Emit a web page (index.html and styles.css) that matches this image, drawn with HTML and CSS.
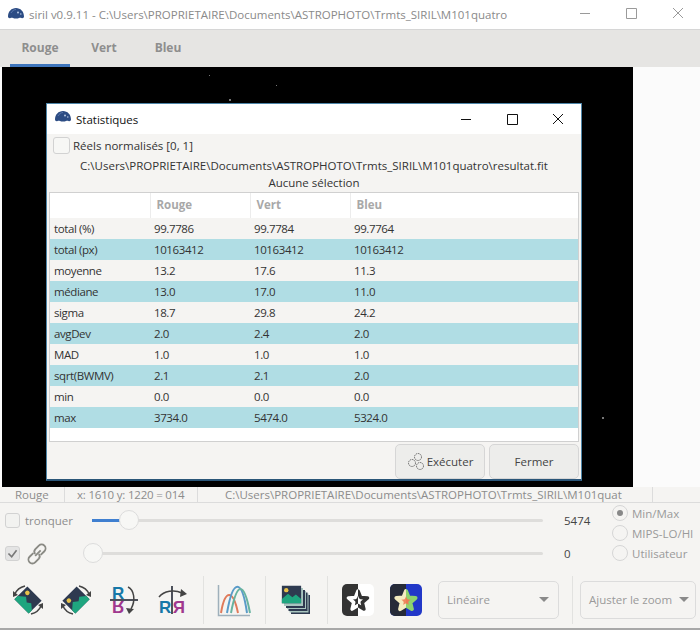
FILE: index.html
```html
<!DOCTYPE html>
<html lang="en">
<head>
	<title>siril</title>
	<link rel="stylesheet" href="styles.css">
</head>
<body>
<svg width="0" height="0" class="defs">
	<symbol id="logo" viewBox="0 0 16 11">
		<path d="M0 8.500C0 3.500 3.500 0 8 0s8 3.500 8 8.500c0 1.500-1.500 2-2.500 1.500-1-.5-1.500-.5-2.500 0-1 .5-1.500.5-3 .5s-2 0-3-.5c-1-.5-1.500-.5-2.500 0C1.500 10.500 0 10 0 8.500z" fill="#2c4c84"/>
		<path d="M3 5c1-2 3-3.500 5-3.500" fill="none" stroke="#5b78ad" stroke-width="1"/>
		<circle cx="10" cy="4.500" r="1" fill="#b5c6e2"/>
		<circle cx="12.800" cy="6" r=".8" fill="#b5c6e2"/>
	</symbol>
	<symbol id="photo" viewBox="0 0 24 24">
		<rect x="1" y="2" width="22" height="20" fill="#2e3a50"/>
		<path d="M1 22v-5l7-6 5 4 4-3 6 5v5z" fill="#1fa57f"/>
		<circle cx="6" cy="7" r="2.500" fill="#e8c24a"/>
	</symbol>
	<clipPath id="lefthalf"><rect width="16" height="32"/></clipPath>
	<clipPath id="righthalf"><rect x="16" width="16" height="32"/></clipPath>
</svg>

<div class="app">
	<div class="titlebar">
		<svg class="logo"><use href="#logo"/></svg>
		<span class="wintitle">siril v0.9.11 - C:\Users\PROPRIETAIRE\Documents\ASTROPHOTO\Trmts_SIRIL\M101quatro</span>
		<div class="winbtns grey">
			<svg viewBox="0 0 46 29"><path d="M18 14.500h10"/></svg>
			<svg viewBox="0 0 46 29"><path d="M18.500 9.500h10v10h-10z"/></svg>
			<svg viewBox="0 0 46 29"><path d="M19 9l10 10M29 9l-10 10"/></svg>
		</div>
	</div>

	<div class="tabs">
		<span class="tab active">Rouge</span>
		<span class="tab">Vert</span>
		<span class="tab">Bleu</span>
	</div>

	<div class="viewer">
		<div class="canvas">
			<i class="star s1"></i><i class="star s2"></i><i class="star s3"></i><i class="star s4"></i>
		</div>
	</div>

	<div class="statusbar">
		<span class="st-chan">Rouge</span>
		<span class="st-pos">x: 1610 y: 1220 = 014</span>
		<span class="st-path">C:\Users\PROPRIETAIRE\Documents\ASTROPHOTO\Trmts_SIRIL\M101quat</span>
	</div>

	<div class="controls">
		<div class="sliders">
			<div class="slrow">
				<span class="check"></span>
				<span class="tronq">tronquer</span>
				<div class="slider first"><b class="fill"></b><b class="knob"></b></div>
				<span class="slval">5474</span>
			</div>
			<div class="slrow">
				<span class="check on"><svg viewBox="0 0 16 16"><path d="M3 8l4 4 6-8"/></svg></span>
				<svg class="chain" viewBox="0 0 26 26"><path d="M11 15l6-6M9 12l-4 4a4 4 0 0 0 6 6l4-4a4 4 0 0 0 0-5M17 14l4-4a4 4 0 0 0-6-6l-4 4a4 4 0 0 0 0 5"/></svg>
				<div class="slider second"><b class="knob"></b></div>
				<span class="slval">0</span>
			</div>
		</div>
		<div class="radios">
			<label class="radio"><span class="dot on"></span>Min/Max</label>
			<label class="radio"><span class="dot"></span>MIPS-LO/HI</label>
			<label class="radio"><span class="dot"></span>Utilisateur</label>
		</div>
	</div>

	<div class="toolbar">
		<svg class="tool" viewBox="0 0 32 32">
			<use href="#photo" x="5" y="5" width="22" height="22" transform="rotate(45 16 16)"/>
			<path class="arc" d="M3 10C5 5 9 3 13 2M29 22c-2 5-6 7-10 8"/>
			<path class="head" d="M1 7l0 6 5-2zM31 25l0-6-5 2z"/>
		</svg>
		<svg class="tool" viewBox="0 0 32 32">
			<use href="#photo" x="5" y="5" width="22" height="22" transform="rotate(-45 16 16)"/>
			<path class="arc" d="M19 2c4 1 8 3 10 8M13 30c-4-1-8-3-10-8"/>
			<path class="head" d="M31 7l0 6-5-2zM1 25l0-6 5 2z"/>
		</svg>
		<svg class="tool" viewBox="0 0 32 32">
			<text x="4" y="15" class="rr blue">R</text>
			<text x="4" y="-17" class="rr pink" transform="scale(1 -1)">R</text>
			<path class="bar" d="M2 16h28"/>
			<path class="arc" d="M20 3c6 3 8 13 3 22"/>
			<path class="head" d="M18 24l8 1-5 5z"/>
		</svg>
		<svg class="tool" viewBox="0 0 32 32">
			<text x="3" y="29" class="rr blue">R</text>
			<text x="-29" y="29" class="rr pink" transform="scale(-1 1)">R</text>
			<path class="bar" d="M16 2v28"/>
			<path class="arc" d="M3 13c5-6 15-8 23-4"/>
			<path class="head" d="M25 5l6 5-7 3z"/>
		</svg>
		<span class="sep"></span>
		<svg class="tool" viewBox="0 0 32 32">
			<path d="M.5 1v30.500H32" fill="none" stroke="#9fb0bb" stroke-width="1.500"/>
			<path d="M3 29C7 5 15 5 20 29" fill="none" stroke="#e07a5a" stroke-width="2"/>
			<path d="M9 29C15-6 24-6 29 29" fill="none" stroke="#5a9bc8" stroke-width="2"/>
			<path d="M13 29C19-3 26-3 32 29" fill="none" stroke="#68b3a0" stroke-width="2"/>
		</svg>
		<span class="sep"></span>
		<svg class="tool" viewBox="0 0 32 32">
			<rect x="11" y="11" width="19" height="19" fill="#2e3a50"/>
			<rect x="9.500" y="9.500" width="19" height="19" fill="#a9c6c0"/>
			<rect x="8.500" y="8.500" width="19" height="18.500" fill="#2e3a50"/>
			<rect x="7" y="7" width="19" height="18" fill="#a9c6c0"/>
			<rect x="6" y="6" width="19" height="18" fill="#2e3a50"/>
			<rect x="4" y="4" width="19" height="18" fill="#a9c6c0"/>
			<use href="#photo" x="1" y="0" width="21" height="21"/>
		</svg>
		<span class="sep"></span>
		<svg class="tool" viewBox="0 0 32 32">
			<rect width="32" height="32" rx="5" fill="#fff"/>
			<path d="M5 0h11v32H5a5 5 0 0 1-5-5V5a5 5 0 0 1 5-5z" fill="#333"/>
			<path clip-path="url(#lefthalf)" d="M16 7l2.600 6.400 6.900.5-5.200 4.500 1.600 6.700-5.900-3.600-5.900 3.600 1.600-6.700-5.200-4.500 6.900-.5z" fill="none" stroke="#fff" stroke-width="3.500" stroke-linejoin="round"/>
			<path clip-path="url(#righthalf)" d="M16 7l2.600 6.400 6.900.5-5.200 4.500 1.600 6.700-5.900-3.600-5.900 3.600 1.600-6.700-5.200-4.500 6.900-.5z" fill="none" stroke="#333" stroke-width="3.500" stroke-linejoin="round"/>
		</svg>
		<svg class="tool" viewBox="0 0 32 32">
			<rect width="32" height="32" rx="5" fill="#2238c8"/>
			<path d="M5 0h11v32H5a5 5 0 0 1-5-5V5a5 5 0 0 1 5-5z" fill="#262b38"/>
			<path clip-path="url(#lefthalf)" d="M16 7l2.600 6.400 6.900.5-5.200 4.500 1.600 6.700-5.900-3.600-5.900 3.600 1.600-6.700-5.200-4.500 6.900-.5z" fill="#ee8a5f" stroke="#f3ecc0" stroke-width="4" stroke-linejoin="round"/>
			<path clip-path="url(#righthalf)" d="M16 7l2.600 6.400 6.900.5-5.200 4.500 1.600 6.700-5.900-3.600-5.900 3.600 1.600-6.700-5.200-4.500 6.900-.5z" fill="#ee7a55" stroke="#8ed36d" stroke-width="4" stroke-linejoin="round"/>
		</svg>
		<div class="combo linear">Linéaire<b class="caret"></b></div>
		<span class="sep tall"></span>
		<div class="combo zoom">Ajuster le zoom<b class="caret"></b></div>
	</div>
</div>

<div class="dialog">
	<div class="dlg-title">
		<svg class="logo"><use href="#logo"/></svg>
		<span>Statistiques</span>
		<div class="winbtns black">
			<svg viewBox="0 0 46 29"><path d="M18 14.500h10"/></svg>
			<svg viewBox="0 0 46 29"><path d="M18.500 9.500h10v10h-10z"/></svg>
			<svg viewBox="0 0 46 29"><path d="M18 9l10 10M28 9l-10 10"/></svg>
		</div>
	</div>
	<div class="dlg-body">
		<div class="normrow"><span class="check big"></span>Réels normalisés [0, 1]</div>
		<div class="fitpath">C:\Users\PROPRIETAIRE\Documents\ASTROPHOTO\Trmts_SIRIL\M101quatro\resultat.fit</div>
		<div class="selection">Aucune sélection</div>
		<div class="tablebox">
			<table class="stats">
				<tr class="head-row"><th></th><th>Rouge</th><th>Vert</th><th>Bleu</th><th class="rest"></th></tr>
				<tr><td>total (%)</td><td>99.7786</td><td>99.7784</td><td>99.7764</td><td></td></tr>
				<tr><td>total (px)</td><td>10163412</td><td>10163412</td><td>10163412</td><td></td></tr>
				<tr><td>moyenne</td><td>13.2</td><td>17.6</td><td>11.3</td><td></td></tr>
				<tr><td>médiane</td><td>13.0</td><td>17.0</td><td>11.0</td><td></td></tr>
				<tr><td>sigma</td><td>18.7</td><td>29.8</td><td>24.2</td><td></td></tr>
				<tr><td>avgDev</td><td>2.0</td><td>2.4</td><td>2.0</td><td></td></tr>
				<tr><td>MAD</td><td>1.0</td><td>1.0</td><td>1.0</td><td></td></tr>
				<tr><td>sqrt(BWMV)</td><td>2.1</td><td>2.1</td><td>2.0</td><td></td></tr>
				<tr><td>min</td><td>0.0</td><td>0.0</td><td>0.0</td><td></td></tr>
				<tr><td>max</td><td>3734.0</td><td>5474.0</td><td>5324.0</td><td></td></tr>
			</table>
		</div>
		<div class="dlg-actions">
			<button class="btn">
				<svg class="gears" viewBox="0 0 20 20"><g fill="none" stroke="#666" stroke-width="1" stroke-dasharray="1.500 .8"><circle cx="11" cy="5" r="3.500"/><circle cx="5" cy="11" r="3.500"/><circle cx="13" cy="14" r="3.500"/></g></svg>Exécuter
			</button>
			<button class="btn">Fermer</button>
		</div>
	</div>
</div>
</body>
</html>
```

FILE: styles.css
```css
html, body {
	margin: 0;
	padding: 0;
}

body {
	width: 700px;
	height: 630px;
	overflow: hidden;
	position: relative;
	font-family: "Open Sans", "Noto Sans", sans-serif;
	font-size: 11.5px;
	color: #333;
}

.defs {
	position: absolute;
}

.app {
	width: 700px;
	height: 630px;
	display: flex;
	flex-direction: column;
	background: #f5f4f2;
}

/* window title */
.titlebar {
	height: 29px;
	display: flex;
	align-items: center;
	background: #fff;
	border-bottom: 1px solid #d6d6d6;
	flex: none;
}

.logo {
	width: 16px;
	height: 11px;
	flex: none;
}

.titlebar .logo {
	margin: 0 5px 3px 8px;
}

.wintitle {
	color: #8a8a8a;
	white-space: nowrap;
}

.winbtns {
	margin-left: auto;
	display: flex;
}

.winbtns svg {
	width: 46px;
	height: 29px;
	fill: none;
	stroke-width: 1;
}

.winbtns.grey {
	margin-top: -3px;
}

.winbtns.grey svg {
	stroke: #9a9a9a;
}

.winbtns.black svg {
	stroke: #111;
}

/* tabs */
.tabs {
	height: 37px;
	display: flex;
	flex: none;
	padding-left: 10px;
	background: #e6e5e3;
	box-sizing: border-box;
}

.tab {
	width: 60px;
	margin-right: 4px;
	text-align: center;
	line-height: 35px;
	font-size: 12px;
	font-weight: 700;
	color: #8e8e8e;
	box-sizing: border-box;
}

.tab.active {
	border-bottom: 3px solid #3f76bd;
	height: 37px;
}

/* image area */
.viewer {
	height: 420px;
	flex: none;
	padding-left: 2px;
	background: #fbfbfb;
	box-sizing: border-box;
}

.canvas {
	width: 631px;
	height: 420px;
	background: #000;
	position: relative;
}

.star {
	position: absolute;
	width: 2px;
	height: 2px;
	background: #777;
}

.s1 { left: 227px; top: 32px; }
.s2 { left: 207px; top: 8px; width: 1px; height: 1px; }
.s3 { left: 274px; top: 18px; width: 1px; height: 1px; }
.s4 { left: 600px; top: 350px; }

/* status line */
.statusbar {
	height: 16px;
	flex: none;
	display: flex;
	align-items: center;
	border-bottom: 1px solid #dcdcdc;
	color: #8c8c8c;
	white-space: nowrap;
	overflow: hidden;
	box-sizing: border-box;
}

.statusbar span {
	height: 100%;
	line-height: 15px;
	box-sizing: border-box;
}

.st-chan {
	width: 65px;
	padding-left: 15px;
	border-right: 1px solid #dcdcdc;
}

.st-pos {
	width: 133px;
	padding-left: 12px;
	letter-spacing: -.2px;
	border-right: 1px solid #dcdcdc;
}

.st-path {
	width: 455px;
	padding-left: 27px;
	border-right: 1px solid #dcdcdc;
}

/* sliders and radios */
.controls {
	height: 68px;
	flex: none;
	display: flex;
}

.sliders {
	width: 612px;
	padding-top: 1px;
	box-sizing: border-box;
}

.slrow {
	height: 33px;
	display: flex;
	align-items: center;
	position: relative;
	padding-right: 69px;
}

.check {
	width: 15px;
	height: 15px;
	margin-left: 5px;
	border: 1px solid #d2d2d2;
	border-radius: 3px;
	background: #f2f2f0;
	box-sizing: border-box;
	flex: none;
}

.check.on {
	background: #e4e4e4;
}

.check.on svg {
	display: block;
	fill: none;
	stroke: #777;
	stroke-width: 2;
}

.tronq {
	margin-left: 5px;
	color: #8e8e8e;
}

.chain {
	width: 24px;
	height: 24px;
	margin-left: 5px;
	fill: none;
	stroke: #8a8a84;
	stroke-width: 2;
}

.slider {
	height: 3px;
	background: #dedddb;
	border-radius: 2px;
	position: relative;
	width: 451px;
	margin-left: auto;
}

.fill {
	position: absolute;
	left: 0;
	top: 0;
	width: 30px;
	height: 3px;
	background: #3f7fd0;
}

.knob {
	position: absolute;
	top: -9px;
	width: 20px;
	height: 20px;
	border: 1px solid #dcdcdc;
	border-radius: 50%;
	background: #f7f7f5;
	box-sizing: border-box;
}

.first .knob {
	left: 27px;
}

.second .knob {
	left: -9px;
}

.slval {
	position: absolute;
	left: 564px;
	color: #444;
}

.radios {
	color: #9a9a9a;
}

.radio {
	display: flex;
	align-items: center;
	height: 20px;
	white-space: nowrap;
}

.dot {
	width: 16px;
	height: 16px;
	margin-right: 4px;
	border: 1px solid #d6d6d6;
	border-radius: 50%;
	position: relative;
	box-sizing: border-box;
}

.dot.on:after {
	content: "";
	position: absolute;
	left: 4px;
	top: 4px;
	width: 6px;
	height: 6px;
	border-radius: 50%;
	background: #888;
}

/* bottom toolbar */
.toolbar {
	flex: 1;
	display: flex;
	align-items: center;
	padding-left: 12px;
	border-bottom: 2px solid #a8a8a8;
	box-sizing: border-box;
}

.tool {
	width: 32px;
	height: 32px;
	flex: none;
	margin-right: 16px;
	overflow: visible;
}

.arc {
	fill: none;
	stroke: #444;
	stroke-width: 1.500;
}

.head {
	fill: #444;
}

.bar {
	stroke: #3a3f4a;
	stroke-width: 1.800;
}

.rr {
	font-family: "Liberation Sans", sans-serif;
	font-weight: 700;
	font-size: 17px;
}

.blue {
	fill: #1678a8;
}

.pink {
	fill: #a0388e;
}

.sep {
	width: 1px;
	height: 48px;
	background: #e2e2e0;
	margin: 0 14px 0 -1px;
	flex: none;
}

.combo {
	height: 38px;
	border: 1px solid #dcdcdc;
	border-radius: 5px;
	display: flex;
	align-items: center;
	justify-content: space-between;
	color: #9a9a9a;
	box-sizing: border-box;
	padding: 0 6px 0 8px;
	flex: none;
}

.combo.linear {
	width: 121px;
	padding-right: 9px;
	margin-right: 13px;
}

.combo.zoom {
	width: 116px;
}

.caret {
	width: 0;
	height: 0;
	border-left: 5px solid transparent;
	border-right: 5px solid transparent;
	border-top: 5px solid #8a8a8a;
}

.sep.tall {
	margin: 0 7px 0 0;
}

/* statistics dialog */
.dialog {
	position: absolute;
	left: 46px;
	top: 103px;
	width: 536px;
	height: 378px;
	border: 1px solid #4d85a8;
	border-bottom: 2px solid #2a5578;
	box-sizing: border-box;
	display: flex;
	flex-direction: column;
	background: #f5f4f2;
}

.dlg-title {
	height: 30px;
	flex: none;
	display: flex;
	align-items: center;
	background: #fff;
	color: #111;
}

.dlg-title .logo {
	margin: 0 5px 5px 8px;
}

.dlg-body {
	flex: 1;
	padding: 0 2px;
	color: #333;
}

.normrow {
	height: 23px;
	display: flex;
	align-items: center;
	padding-left: 4px;
}

.check.big {
	width: 17px;
	height: 17px;
	margin: 0 3px 0 0;
	background: #f7f7f5;
}

.fitpath {
	text-align: center;
	height: 18px;
	line-height: 18px;
}

.selection {
	text-align: center;
	height: 16px;
	line-height: 16px;
}

.tablebox {
	height: 250px;
	margin-top: 1px;
	background: #fff;
	border: 1px solid #d0d0d0;
	box-sizing: border-box;
}

.stats {
	width: 100%;
	border-collapse: collapse;
	table-layout: fixed;
	letter-spacing: -.4px;
}

.stats th {
	height: 25px;
	padding: 0 0 2px 6px;
	text-align: left;
	font-weight: 700;
	letter-spacing: 0;
	color: #a8a8a8;
	border-right: 1px solid #ececec;
	box-sizing: border-box;
}

.stats th:nth-child(1),
.stats th:nth-child(2),
.stats th:nth-child(3) { width: 100px; }

.stats th:nth-child(4) {
	width: 100px;
	border-right: 0;
}

.stats th.rest {
	width: auto;
	border-right: 0;
}

.stats td {
	height: 21px;
	padding: 0 0 0 4px;
	box-sizing: border-box;
	white-space: nowrap;
}

.stats tr:nth-child(even) td {
	background: #f5f4f2;
}

.stats tr:nth-child(odd) td {
	background: #b0dde4;
}

.dlg-actions {
	display: flex;
	justify-content: flex-end;
	gap: 4px;
	padding-top: 2px;
}

.btn {
	width: 90px;
	height: 35px;
	border: 1px solid #d6d6d6;
	border-radius: 5px;
	background: #ededeb;
	font: inherit;
	color: #444;
	display: flex;
	align-items: center;
	justify-content: center;
	padding: 0;
}

.gears {
	width: 20px;
	height: 20px;
}
```
